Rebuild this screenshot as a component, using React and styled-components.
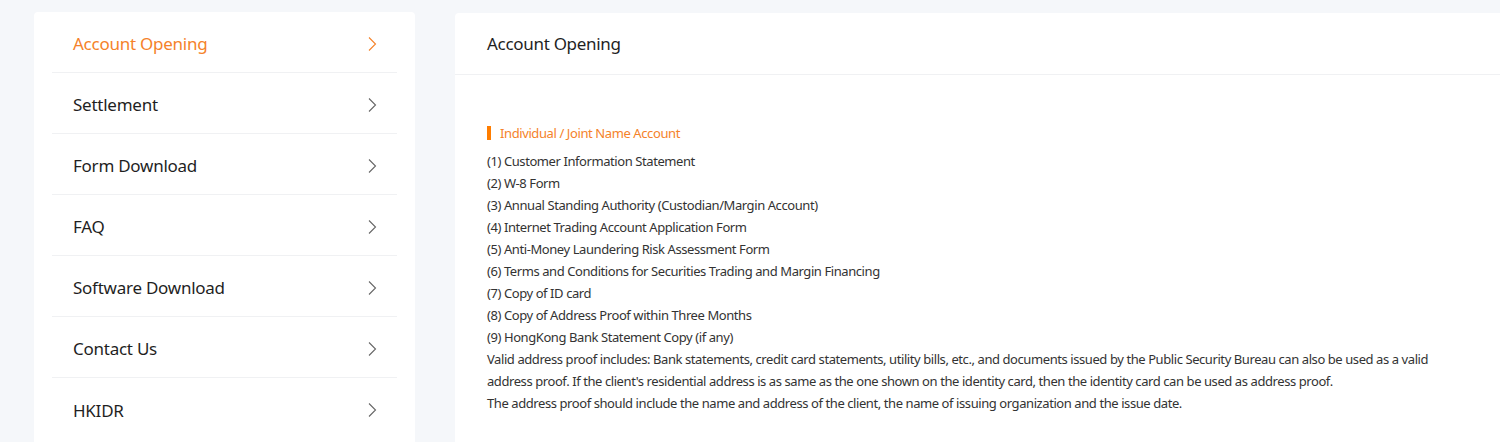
import React from 'react';
import styled, { createGlobalStyle } from 'styled-components';

const GlobalStyle = createGlobalStyle`
	html, body {
		margin: 0;
		padding: 0;
		background: #f5f7fa;
		font-family: 'Noto Sans', 'Open Sans', sans-serif;
		overflow: hidden;
	}
`;

const menu = [
	'Account Opening',
	'Settlement',
	'Form Download',
	'FAQ',
	'Software Download',
	'Contact Us',
	'HKIDR',
];

const documents = [
	'(1) Customer Information Statement',
	'(2) W-8 Form',
	'(3) Annual Standing Authority (Custodian/Margin Account)',
	'(4) Internet Trading Account Application Form',
	'(5) Anti-Money Laundering Risk Assessment Form',
	'(6) Terms and Conditions for Securities Trading and Margin Financing',
	'(7) Copy of ID card',
	'(8) Copy of Address Proof within Three Months',
	'(9) HongKong Bank Statement Copy (if any)',
	"Valid address proof includes: Bank statements, credit card statements, utility bills, etc., and documents issued by the Public Security Bureau can also be used as a valid address proof. If the client's residential address is as same as the one shown on the identity card, then the identity card can be used as address proof.",
	'The address proof should include the name and address of the client, the name of issuing organization and the issue date.',
];

const Chevron = ({ color }) => (
	<svg width="10" height="16" viewBox="0 0 10 16" fill="none">
		<path d="M2 1.5 L8.5 8 L2 14.5" stroke={color} strokeWidth="1.1" />
	</svg>
);

const App = () => {
	const active = 0;

	return (
		<>
			<GlobalStyle />
			<Page>
				<Sidebar>
					{menu.map((label, i) => (
						<MenuItem key={label} $active={i === active}>
							<span>{label}</span>
							<Chevron color={i === active ? '#f5822a' : '#666'} />
						</MenuItem>
					))}
				</Sidebar>

				<Content>
					<Header>Account Opening</Header>
					<Body>
						<SectionTitle>Individual / Joint Name Account</SectionTitle>
						{documents.map((line) => (
							<Line key={line}>{line}</Line>
						))}
					</Body>
				</Content>
			</Page>
		</>
	);
};

const Page = styled.div`
	display: flex;
	align-items: flex-start;
	gap: 40px;
	padding: 12px 0 0 34px;
	width: 1600px;
	height: 442px;
	box-sizing: border-box;
`;

const Sidebar = styled.nav`
	width: 381px;
	flex-shrink: 0;
	box-sizing: border-box;
	background: #fff;
	border-radius: 4px;
	padding: 0 18px 20px;
`;

const MenuItem = styled.div`
	height: 61px;
	box-sizing: border-box;
	display: flex;
	align-items: center;
	justify-content: space-between;
	padding: 3px 20px 0 21px;
	border-bottom: 1px solid #f0f1f3;
	font-size: 17px;
	letter-spacing: -0.25px;
	color: ${(props) => (props.$active ? '#f5822a' : '#1f1f1f')};
	cursor: pointer;

	&:last-child {
		border-bottom: none;
	}

	svg {
		flex-shrink: 0;
	}
`;

const Content = styled.section`
	width: 1080px;
	flex-shrink: 0;
	margin-top: 1px;
	background: #fff;
	border-radius: 4px;
	min-height: 440px;
`;

const Header = styled.div`
	height: 61px;
	display: flex;
	align-items: center;
	padding: 0 32px;
	border-bottom: 1px solid #f0f1f3;
	font-size: 17px;
	letter-spacing: -0.3px;
	color: #1f1f1f;
`;

const Body = styled.div`
	padding: 47px 32px 32px;
	width: 981px;
	box-sizing: content-box;
`;

const SectionTitle = styled.div`
	display: flex;
	align-items: center;
	gap: 9px;
	font-size: 13px;
	letter-spacing: -0.4px;
	line-height: 22px;
	color: #f5822a;
	margin-bottom: 6px;

	&::before {
		content: '';
		width: 4px;
		height: 14px;
		background: #ff7d00;
	}
`;

const Line = styled.p`
	margin: 0;
	font-size: 13px;
	letter-spacing: -0.42px;
	line-height: 22px;
	color: #333;
`;

export default App;
